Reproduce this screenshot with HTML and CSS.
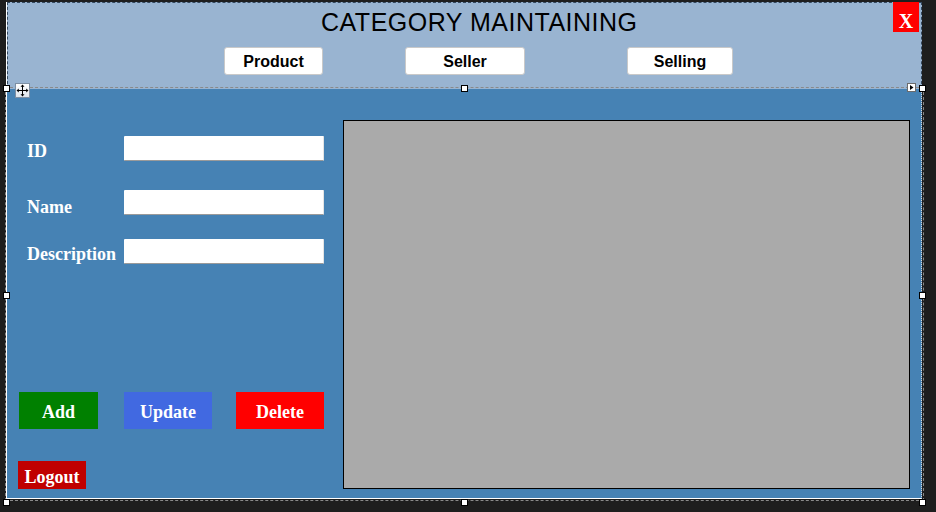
FILE: index.html
```html
<!DOCTYPE html>
<html>
<head>
<meta charset="utf-8">
<link rel="stylesheet" href="styles.css">
</head>
<body>
<div class="frame">
  <div class="header">
    <div class="titlebar">
      <span class="title">CATEGORY MAINTAINING</span>
    </div>
    <div class="nav">
      <button class="navbtn nb-product">Product</button>
      <button class="navbtn nb-seller">Seller</button>
      <button class="navbtn nb-selling">Selling</button>
    </div>
  </div>
  <div class="main">
    <div class="leftcol">
      <div class="field f-id">
        <span class="lbl l-id">ID</span>
        <input class="tb" type="text">
      </div>
      <div class="field f-name">
        <span class="lbl l-name">Name</span>
        <input class="tb" type="text">
      </div>
      <div class="field f-desc">
        <span class="lbl l-desc">Description</span>
        <input class="tb" type="text">
      </div>
      <div class="actions">
        <button class="act act-add">Add</button>
        <button class="act act-update">Update</button>
        <button class="act act-delete">Delete</button>
      </div>
      <button class="act act-logout">Logout</button>
    </div>
    <div class="grid"></div>
  </div>

  <button class="close">X</button>

  <span class="handle h1"></span>
  <span class="handle h2"></span>
  <span class="handle h3"></span>
  <span class="handle h4"></span>
  <span class="handle h5"></span>
  <span class="handle h6"></span>
  <span class="handle h7"></span>
  <span class="handle h8"></span>

  <span class="move">
    <svg width="13" height="13" viewBox="0 0 13 13">
      <path d="M6.5 1 L6.5 12 M1 6.5 L12 6.5" stroke="#000" stroke-width="1" fill="none"/>
      <path d="M6.5 0.5 L4.5 2.8 L8.5 2.8 Z M6.5 12.5 L4.5 10.2 L8.5 10.2 Z M0.5 6.5 L2.8 4.5 L2.8 8.5 Z M12.5 6.5 L10.2 4.5 L10.2 8.5 Z" fill="#000"/>
    </svg>
  </span>
  <span class="smarttag">
    <svg width="7" height="7" viewBox="0 0 7 7">
      <path d="M2 1 L5.5 3.5 L2 6 Z" fill="#000"/>
    </svg>
  </span>
</div>
</body>
</html>
```
FILE: styles.css
```css
html, body {
  margin: 0;
  padding: 0;
}
body {
  background: #1e1e1e;
  padding: 2px 0 0 6px;
  width: 936px;
  height: 512px;
  box-sizing: border-box;
  overflow: hidden;
}
.frame {
  position: relative;
  width: 916px;
  border-left: 1px solid #ffffff;
  box-sizing: border-box;
}
.header {
  height: 87px;
  box-sizing: border-box;
  background: #99b4d1;
  border-top: 1px dashed #34485e;
  border-left: 1px dashed #34485e;
  border-right: 1px dashed #34485e;
}
.titlebar {
  height: 33px;
  padding-top: 5px;
  box-sizing: border-box;
}
.title {
  display: block;
  margin-left: 313px;
  font-family: "Liberation Sans", Arial, sans-serif;
  font-size: 25px;
  letter-spacing: 0.5px;
  line-height: 29px;
  color: #000;
  white-space: nowrap;
}
.nav {
  display: flex;
  margin-top: 11px;
}
.navbtn {
  height: 28px;
  box-sizing: border-box;
  background: #ffffff;
  border: 1px solid #c9c9c9;
  border-radius: 3px;
  font-family: "Liberation Sans", Arial, sans-serif;
  font-weight: bold;
  font-size: 16px;
  color: #000;
  padding: 2px 0 0 0;
}
.nb-product { margin-left: 216px; width: 99px; }
.nb-seller { margin-left: 82px; width: 120px; }
.nb-selling { margin-left: 102px; width: 106px; }

.main {
  display: flex;
  height: 410px;
  box-sizing: border-box;
  background: #4682b4;
  padding: 31px 11px 0 0;
  border-bottom: 1px solid #ffffff;
  border-right: 1px dotted #d8d8d8;
  outline: 1px dashed #8a8a8a;
  outline-offset: 1px;
}
.leftcol {
  width: 336px;
  flex: 0 0 336px;
}
.field {
  display: flex;
  align-items: center;
  height: 25px;
}
.f-id { margin-top: 16px; }
.f-name { margin-top: 29px; }
.f-desc { margin-top: 24px; }
.lbl {
  width: 97px;
  padding-left: 20px;
  font-family: "Liberation Serif", "Times New Roman", serif;
  font-weight: bold;
  font-size: 18px;
  color: #ffffff;
  white-space: nowrap;
}
.l-id { padding-top: 6px; }
.l-name { padding-top: 10px; }
.l-desc { padding-top: 5px; }
.tb {
  width: 200px;
  height: 25px;
  box-sizing: border-box;
  margin: 0;
  padding: 0 3px;
  background: #ffffff;
  border: 0;
  border-bottom: 1px solid #9a9a9a;
  border-right: 1px solid #e4e4e4;
  border-radius: 1px;
  outline: none;
}
.actions {
  display: flex;
  margin-top: 128px;
}
.act {
  border: 0;
  padding: 3px 0 0 0;
  font-family: "Liberation Serif", "Times New Roman", serif;
  font-weight: bold;
  font-size: 18px;
  color: #ffffff;
}
.act-add { margin-left: 12px; width: 79px; height: 37px; background: #008000; }
.act-update { margin-left: 26px; width: 88px; height: 37px; background: #4169e1; }
.act-delete { margin-left: 24px; width: 88px; height: 37px; background: #ff0000; }
.act-logout {
  display: block;
  margin-top: 32px;
  margin-left: 11px;
  width: 68px;
  height: 28px;
  background: #c00000;
  padding-top: 4px;
}
.grid {
  width: 567px;
  height: 369px;
  box-sizing: border-box;
  background: #aaaaaa;
  border: 1px solid #000000;
}

.close {
  position: absolute;
  left: 886px;
  top: 0;
  width: 26px;
  height: 30px;
  box-sizing: border-box;
  border: 0;
  margin: 0;
  padding: 0 0 1px 0;
  background: #ff0000;
  color: #ffffff;
  font-family: "Liberation Serif", "Times New Roman", serif;
  font-weight: bold;
  font-size: 20px;
  line-height: 1;
  display: flex;
  align-items: flex-end;
  justify-content: center;
}

.handle {
  position: absolute;
  width: 7px;
  height: 7px;
  box-sizing: border-box;
  background: #ffffff;
  border: 1px solid #000000;
}
.h1 { left: -4px; top: 83px; }
.h2 { left: 454px; top: 83px; }
.h3 { left: 912px; top: 83px; }
.h4 { left: -4px; top: 290px; }
.h5 { left: 912px; top: 290px; }
.h6 { left: -4px; top: 497px; }
.h7 { left: 454px; top: 497px; }
.h8 { left: 912px; top: 497px; }

.move {
  position: absolute;
  left: 8px;
  top: 81px;
  width: 15px;
  height: 15px;
  box-sizing: border-box;
  border: 1px solid #7d8fa3;
  background: linear-gradient(#ffffff, #dfe6ee);
  display: flex;
  align-items: center;
  justify-content: center;
}
.smarttag {
  position: absolute;
  left: 900px;
  top: 81px;
  width: 9px;
  height: 9px;
  box-sizing: border-box;
  border: 1px solid #6b6b6b;
  background: #ffffff;
  display: flex;
  align-items: center;
  justify-content: center;
}
```
